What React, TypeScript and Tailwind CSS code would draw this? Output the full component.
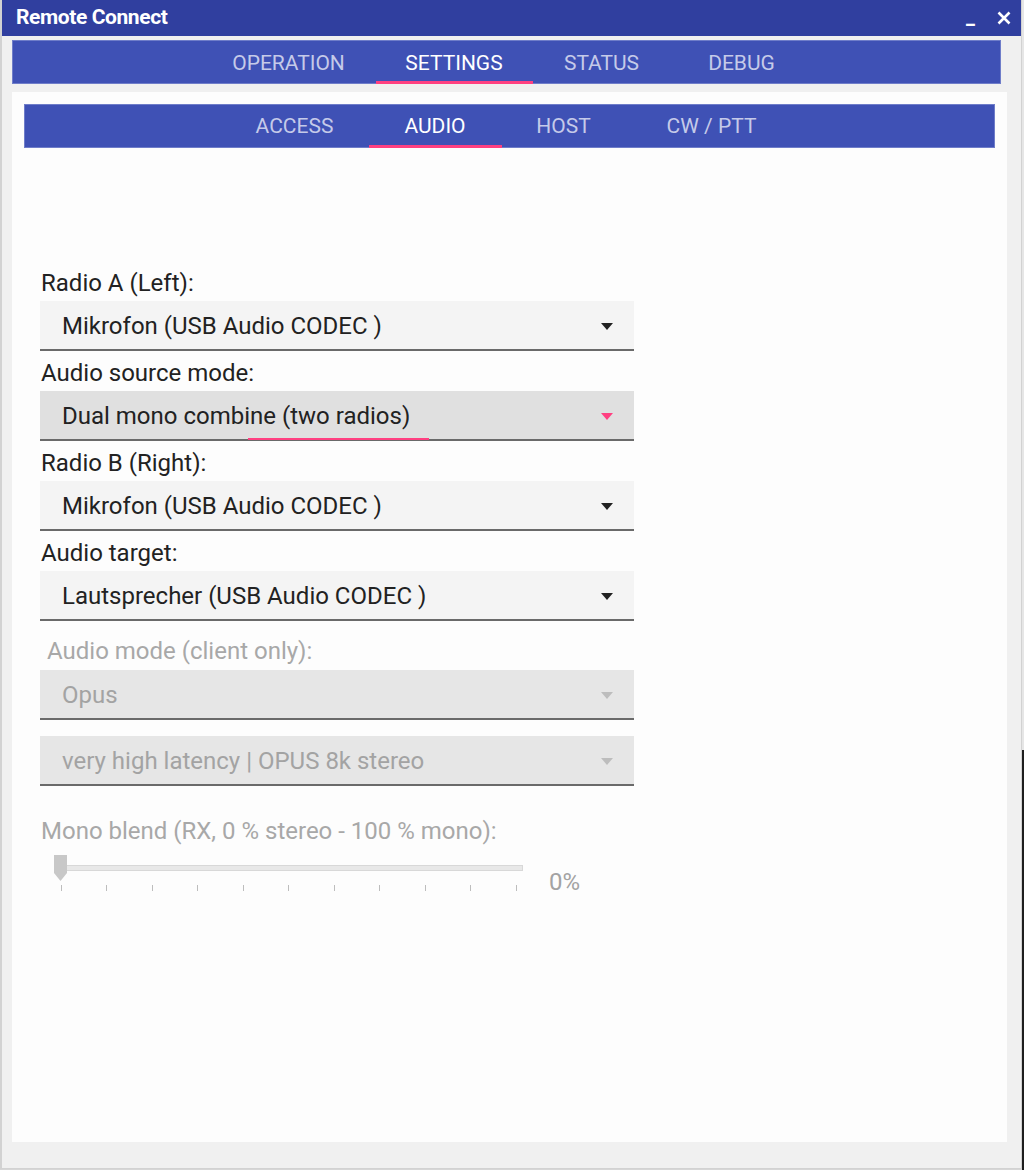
import React from "react";

const font = { fontFamily: "Roboto, 'Noto Sans', sans-serif" };

function Arrow({ color }: { color: string }) {
  return (
    <svg width="12" height="7" viewBox="0 0 12 7" className="shrink-0">
      <path d="M0 0 L12 0 L6 7 Z" fill={color} />
    </svg>
  );
}

function Select({
  value,
  variant = "normal",
}: {
  value: string;
  variant?: "normal" | "focus" | "disabled";
}) {
  const bg =
    variant === "focus" ? "bg-[#e0e0e0]" : variant === "disabled" ? "bg-[#e6e6e6]" : "bg-[#f4f4f4]";
  const text = variant === "disabled" ? "text-[#a3a3a3]" : "text-[#222222]";
  const arrow = variant === "focus" ? "#ff4081" : variant === "disabled" ? "#bdbdbd" : "#222222";
  return (
    <div
      className={`relative h-[50px] w-[594px] ${bg} border-b-2 border-[#6a6a6a] flex items-center pl-[22px] pr-[21px] pt-[2px]`}
    >
      <span className={`flex-1 text-[24px] leading-none ${text}`}>{value}</span>
      <Arrow color={arrow} />
      {variant === "focus" && (
        <div className="absolute left-[208px] bottom-[-1px] h-[2px] w-[181px] bg-[#ff4081]" />
      )}
    </div>
  );
}

function Label({ children, disabled }: { children: React.ReactNode; disabled?: boolean }) {
  return (
    <div
      className={`h-[40px] flex items-center pl-[1px] pt-[4px] text-[24px] leading-none ${
        disabled ? "text-[#a8a8a8]" : "text-[#222222]"
      }`}
    >
      {children}
    </div>
  );
}

export default function App() {
  const ticks = Array.from({ length: 11 }, (_, i) => i);
  return (
    <div className="w-[1024px] h-[1170px] flex bg-[#d6d6d6]" style={font}>
      <div className="w-[1022px] h-[1169px] flex flex-col bg-[#f0f0f0] border-l-2 border-r border-b border-[#d2d2d2]">
        {/* Title bar */}
        <div className="h-[36px] bg-[#303f9f] flex items-center pl-[14px] pr-[8px] shrink-0">
          <span className="text-white text-[21px] font-bold tracking-[-0.4px] flex-1">
            Remote Connect
          </span>
          <span className="text-white text-[20px] font-bold mr-[22px] leading-none mt-[-2px]">_</span>
          <svg width="14" height="14" viewBox="0 0 14 14" className="mr-[2px]">
            <path d="M1.5 1.5 L12.5 12.5 M12.5 1.5 L1.5 12.5" stroke="white" strokeWidth="2.6" />
          </svg>
        </div>

        {/* Outer tabs */}
        <div className="mt-[4px] ml-[10px] w-[989px] h-[44px] bg-[#3f51b5] border border-[#6f7dc9] flex justify-center shrink-0">
          <div className="flex pl-[1px]">
            {[
              ["OPERATION", "w-[174px]", false],
              ["SETTINGS", "w-[157px]", true],
              ["STATUS", "w-[138px]", false],
              ["DEBUG", "w-[142px]", false],
            ].map(([t, w, sel]) => (
              <div
                key={t as string}
                className={`${w} relative flex items-center justify-center pt-[3px] text-[21px] ${
                  sel ? "text-white" : "text-[#c5cae9]"
                }`}
              >
                {t}
                {sel && <div className="absolute left-0 right-0 bottom-[-1px] h-[3px] bg-[#ff4081]" />}
              </div>
            ))}
          </div>
        </div>

        {/* White panel */}
        <div className="mt-[8px] ml-[10px] w-[995px] h-[1050px] bg-[#fdfdfd] flex flex-col pt-[12px] pl-[12px] shrink-0">
          <div className="w-[971px] h-[44px] bg-[#3f51b5] border border-[#6f7dc9] flex justify-center shrink-0">
            <div className="flex pr-[1px]">
              {[
                ["ACCESS", "w-[148px]", false],
                ["AUDIO", "w-[133px]", true],
                ["HOST", "w-[124px]", false],
                ["CW / PTT", "w-[172px]", false],
              ].map(([t, w, sel]) => (
                <div
                  key={t as string}
                  className={`${w} relative flex items-center justify-center pt-[2px] text-[21px] ${
                    sel ? "text-white" : "text-[#c5cae9]"
                  }`}
                >
                  {t}
                  {sel && <div className="absolute left-0 right-0 bottom-[-1px] h-[3px] bg-[#ff4081]" />}
                </div>
              ))}
            </div>
          </div>

          {/* Form */}
          <div className="mt-[113px] ml-[16px] flex flex-col w-[594px]">
            <Label>Radio A (Left):</Label>
            <Select value="Mikrofon (USB Audio CODEC )" />
            <Label>Audio source mode:</Label>
            <Select value="Dual mono combine (two radios)" variant="focus" />
            <Label>Radio B (Right):</Label>
            <Select value="Mikrofon (USB Audio CODEC )" />
            <Label>Audio target:</Label>
            <Select value="Lautsprecher (USB Audio CODEC )" />
            <div className="h-[49px] flex items-end pb-[7px] pl-[7px] text-[24px] leading-none text-[#a8a8a8]">
              Audio mode (client only):
            </div>
            <Select value="Opus" variant="disabled" />
            <div className="h-[16px]" />
            <Select value="very high latency | OPUS 8k stereo" variant="disabled" />
            <div className="h-[44px] flex items-end pl-[1px] text-[24px] leading-none text-[#a8a8a8]">
              <span className="translate-y-[13px]">Mono blend (RX, 0 % stereo - 100 % mono):</span>
            </div>

            {/* Slider */}
            <div className="mt-[25px] flex items-start">
              <div className="relative w-[484px] h-[38px]">
                <div className="absolute left-[15px] top-[10px] w-[468px] h-[6px] bg-[#e8e8e8] border border-[#d8d8d8]" />
                <svg
                  className="absolute left-[13px] top-0"
                  width="15"
                  height="27"
                  viewBox="0 0 15 27"
                >
                  <path d="M1 0 H14 V18 L7.5 26 L1 18 Z" fill="#c8c8c8" />
                </svg>
                {ticks.map((i) => (
                  <div
                    key={i}
                    className="absolute top-[30px] w-[1px] h-[6px] bg-[#bdbdbd]"
                    style={{ left: 20.5 + i * 45.5 }}
                  />
                ))}
              </div>
              <div className="ml-[25px] mt-[15px] text-[24px] leading-none text-[#a3a3a3]">0%</div>
            </div>
          </div>
        </div>
      </div>
      <div className="w-[2px] h-[1170px] flex flex-col">
        <div className="h-[750px] bg-[#e6e6e6]" />
        <div className="flex-1 bg-[#1e1e1e]" />
      </div>
    </div>
  );
}
